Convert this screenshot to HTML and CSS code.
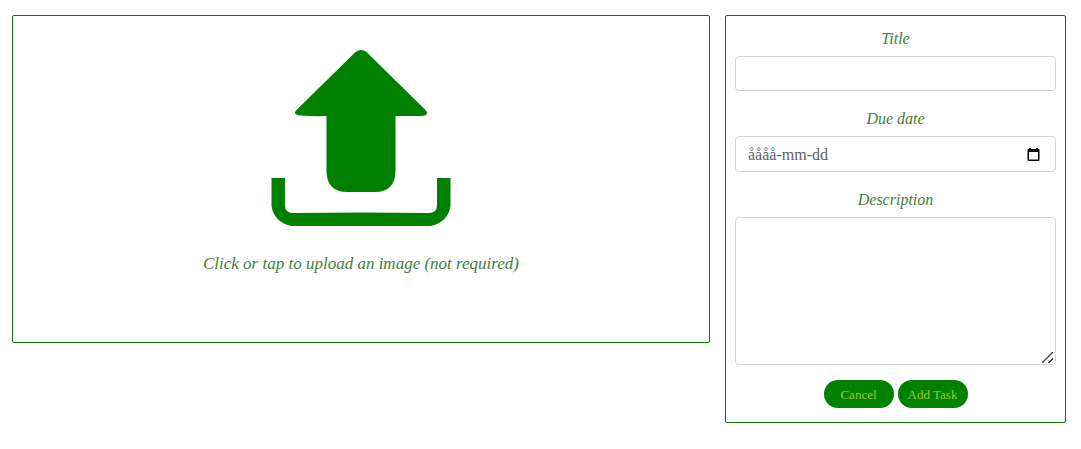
FILE: index.html
```html
<!DOCTYPE html>
<html lang="en">
<head>
<meta charset="utf-8">
<meta name="viewport" content="width=device-width, initial-scale=1">
<title>Add Task</title>
<link rel="stylesheet" href="styles.css">
</head>
<body>
<main class="layout">
  <button type="button" class="panel upload">
    <svg class="upload-icon" viewBox="0 0 180 178" aria-hidden="true">
      <path d="M84.500 3Q90-1 95.500 3L154.500 61Q159 67 150 67H124.500V123Q123.500 143 104 143H76Q56.500 143 55.500 123V67Q42 67.500 30 66.500Q21 66 25.500 61Z"/>
      <path d="M.5 129H14V156Q14 164 22 164Q90 163 158 164Q166 164 166 156V129H179.500V157Q177 173 160 177H20Q3 173 .5 157Z"/>
    </svg>
    <span class="caption">Click or tap to upload an image (not required)</span>
  </button>
  <form class="panel task-form">
    <label class="caption" for="title">Title</label>
    <input class="field" id="title" type="text">
    <label class="caption" for="due">Due date</label>
    <div class="field date-field">
      <input class="date-input" id="due" type="text" placeholder="åååå-mm-dd">
      <button type="button" class="picker" aria-label="Choose date">
        <svg class="picker-icon" viewBox="0 0 13 13" aria-hidden="true">
          <path fill-rule="evenodd" d="M2 0H4V1H9V0H11V1H11.500Q12.500 1 12.500 2V12Q12.500 13 11.500 13H1.500Q.5 13 .5 12V2Q.5 1 1.500 1H2ZM2 4V11.500H11V4Z"/>
        </svg>
      </button>
    </div>
    <label class="caption" for="description">Description</label>
    <textarea class="field description" id="description"></textarea>
    <div class="actions">
      <button type="button" class="pill">Cancel</button>
      <button type="submit" class="pill">Add Task</button>
    </div>
  </form>
</main>
</body>
</html>
```
FILE: styles.css
```css
* {
  box-sizing: border-box;
}

body {
  margin: 0;
  background: #fff;
  font-family: "Liberation Serif", serif;
}

button,
input,
textarea {
  font-family: inherit;
}

.layout {
  display: grid;
  grid-template-columns: 698fr 341fr;
  gap: 15px;
  align-items: start;
  padding: 15px 15px 26px 12px;
}

.panel {
  border: 1px solid #0c760f;
  border-radius: 2px;
  background: #fff;
}

.upload {
  display: flex;
  flex-direction: column;
  align-items: center;
  gap: 25px;
  padding: 33px 16px 66px;
  cursor: pointer;
}

.upload-icon {
  width: 180px;
  height: 178px;
  fill: #008000;
}

.caption {
  color: #3f7d40;
  font-size: 16px;
  font-style: italic;
  line-height: 24px;
  text-align: center;
}

.upload .caption {
  font-size: 17px;
}

.task-form {
  display: flex;
  flex-direction: column;
  padding: 11px 9px 14px;
}

.field {
  width: 100%;
  height: 35px;
  margin: 5px 0 16px;
  padding: 0 12px;
  border: 1px solid #ced4da;
  border-radius: 4px;
  background: #fff;
  color: #495057;
  font-size: 16px;
}

.date-field {
  display: flex;
  align-items: center;
  height: 36px;
}

.date-input {
  flex: 1;
  min-width: 0;
  padding: 2px 0 0;
  border: 0;
  outline: 0;
  background: transparent;
  color: inherit;
  font-size: 16px;
}

.date-input::placeholder {
  color: #5b6167;
}

.picker {
  display: flex;
  padding: 0 3px;
  border: 0;
  background: transparent;
}

.picker-icon {
  width: 13px;
  height: 13px;
  fill: #000;
}

.description {
  height: 148px;
  margin-bottom: 15px;
  padding: 6px 12px;
  resize: vertical;
}

.description::-webkit-resizer {
  background: linear-gradient(135deg, transparent 45%, #444 46%, #444 54%, transparent 55%, transparent 75%, #444 76%, #444 84%, transparent 85%) 2px 3px / 11px 11px no-repeat;
}

.actions {
  display: flex;
  justify-content: center;
  gap: 4px;
}

.pill {
  min-width: 70px;
  height: 28px;
  padding: 2px 10px 0;
  border: 0;
  border-radius: 14px;
  background: #008000;
  color: #9acd32;
  font-size: 13px;
}
```
